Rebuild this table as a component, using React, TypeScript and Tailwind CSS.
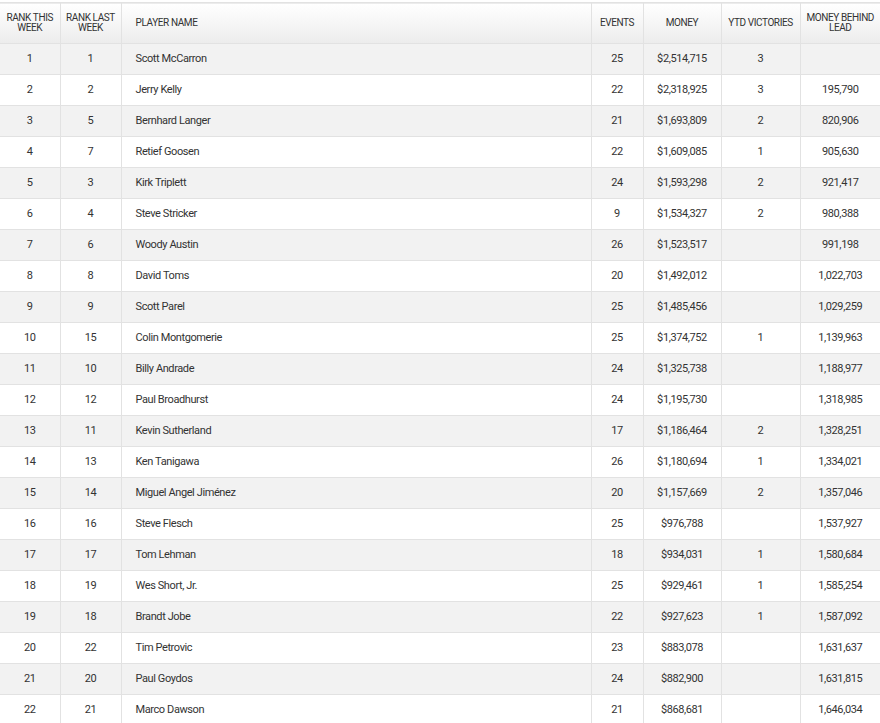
const rows: [number, number, string, number, string, string, string][] = [
  [1, 1, "Scott McCarron", 25, "$2,514,715", "3", ""],
  [2, 2, "Jerry Kelly", 22, "$2,318,925", "3", "195,790"],
  [3, 5, "Bernhard Langer", 21, "$1,693,809", "2", "820,906"],
  [4, 7, "Retief Goosen", 22, "$1,609,085", "1", "905,630"],
  [5, 3, "Kirk Triplett", 24, "$1,593,298", "2", "921,417"],
  [6, 4, "Steve Stricker", 9, "$1,534,327", "2", "980,388"],
  [7, 6, "Woody Austin", 26, "$1,523,517", "", "991,198"],
  [8, 8, "David Toms", 20, "$1,492,012", "", "1,022,703"],
  [9, 9, "Scott Parel", 25, "$1,485,456", "", "1,029,259"],
  [10, 15, "Colin Montgomerie", 25, "$1,374,752", "1", "1,139,963"],
  [11, 10, "Billy Andrade", 24, "$1,325,738", "", "1,188,977"],
  [12, 12, "Paul Broadhurst", 24, "$1,195,730", "", "1,318,985"],
  [13, 11, "Kevin Sutherland", 17, "$1,186,464", "2", "1,328,251"],
  [14, 13, "Ken Tanigawa", 26, "$1,180,694", "1", "1,334,021"],
  [15, 14, "Miguel Angel Jiménez", 20, "$1,157,669", "2", "1,357,046"],
  [16, 16, "Steve Flesch", 25, "$976,788", "", "1,537,927"],
  [17, 17, "Tom Lehman", 18, "$934,031", "1", "1,580,684"],
  [18, 19, "Wes Short, Jr.", 25, "$929,461", "1", "1,585,254"],
  [19, 18, "Brandt Jobe", 22, "$927,623", "1", "1,587,092"],
  [20, 22, "Tim Petrovic", 23, "$883,078", "", "1,631,637"],
  [21, 20, "Paul Goydos", 24, "$882,900", "", "1,631,815"],
  [22, 21, "Marco Dawson", 21, "$868,681", "", "1,646,034"],
]

const th = "border-l border-[#e2e2e2] first:border-l-0 px-1 font-normal uppercase leading-[10px] text-[10px] text-[#333]"
const td = "border-l border-[#e2e2e2] first:border-l-0 text-center"

const App = () => {
  return (
    <div className="w-[880px] h-[723px] overflow-hidden bg-white pt-[2px] font-['Roboto',sans-serif] text-[#333]">
      <table className="w-[880px] table-fixed border-collapse tracking-[-0.4px]">
        <colgroup>
          <col className="w-[60px]" />
          <col className="w-[61px]" />
          <col className="w-[470px]" />
          <col className="w-[52px]" />
          <col className="w-[78px]" />
          <col className="w-[79px]" />
          <col className="w-[80px]" />
        </colgroup>
        <thead>
          <tr className="h-[41px] border-t border-[#e2e2e2] bg-gradient-to-b from-white to-[#ececec]">
            <th className={th}>Rank this<br />week</th>
            <th className={th}>Rank last<br />week</th>
            <th className={th + " text-left pl-[14px]"}>Player name</th>
            <th className={th}>Events</th>
            <th className={th}>Money</th>
            <th className={th}>YTD Victories</th>
            <th className={th}>Money behind<br />lead</th>
          </tr>
        </thead>
        <tbody className="text-[11px]">
          {rows.map((r, i) => (
            <tr key={r[0]} className={"h-[31px] border-t border-[#e2e2e2] " + (i % 2 === 0 ? "bg-[#f2f2f2]" : "bg-white")}>
              <td className={td}>{r[0]}</td>
              <td className={td}>{r[1]}</td>
              <td className={td + " text-left pl-[14px]"}>{r[2]}</td>
              <td className={td}>{r[3]}</td>
              <td className={td}>{r[4]}</td>
              <td className={td}>{r[5]}</td>
              <td className={td}>{r[6]}</td>
            </tr>
          ))}
        </tbody>
      </table>
    </div>
  )
}

export default App
